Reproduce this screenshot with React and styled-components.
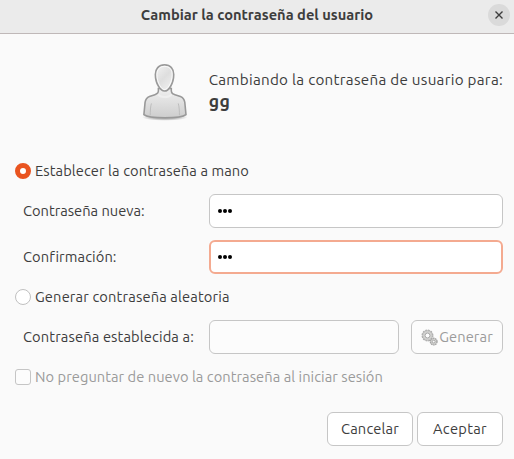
import React from "react";
import styled, { createGlobalStyle } from "styled-components";

const GlobalStyle = createGlobalStyle`
  *, *::before, *::after { box-sizing: border-box; }
  body { margin: 0; background: #fafafa; overflow: hidden; }
`;

const Dialog = styled.div`
  width: 514px;
  height: 459px;
  display: flex;
  flex-direction: column;
  background: #fafafa;
  color: #3d3d3d;
  font: 14.667px/20px Ubuntu, "Noto Sans", sans-serif;
  font-variant-ligatures: none;
`;

const TitleBar = styled.header`
  height: 34px;
  flex: none;
  display: grid;
  grid-template-columns: 22px 1fr 22px;
  align-items: center;
  padding: 0 4px 3px;
  background: #ebebeb;
  border-bottom: 1px solid #bfb8b8;
`;

const Title = styled.h1`
  grid-column: 2;
  margin: 0;
  text-align: center;
  font-size: 14.667px;
  line-height: 20px;
  font-weight: 700;
`;

const CloseButton = styled.button`
  width: 22px;
  height: 22px;
  padding: 0;
  border: 0;
  border-radius: 50%;
  background: #dadada;
  display: grid;
  place-items: center;
`;

const Text = styled.span`
  white-space: nowrap;
  letter-spacing: ${(p) => p.$track || 0}px;
`;

const Content = styled.main`
  flex: 1;
  display: flex;
  flex-direction: column;
  padding: 26px 11px 13px 15px;
`;

const Intro = styled.section`
  height: 64px;
  display: flex;
  padding-left: 126px;
`;

const IntroText = styled.div`
  margin-left: 20px;
  padding-top: 10px;
  display: flex;
  flex-direction: column;
  font-size: 15.2px;
`;

const UserName = styled.strong`
  font-size: 17.6px;
  line-height: 24px;
  letter-spacing: 0.4px;
`;

const Choice = styled.label`
  height: 20px;
  display: flex;
  align-items: center;
  gap: 4px;
  margin-top: ${(p) => p.$top}px;
  color: ${(p) => (p.$disabled ? "#9b9b9b" : "inherit")};
`;

const Radio = styled.i`
  width: 16px;
  height: 16px;
  border-radius: 50%;
  border: ${(p) => (p.$checked ? "5.5px solid #e95420" : "1px solid #c0c0c0")};
  background: #fff;
`;

const Checkbox = styled.i`
  width: 16px;
  height: 16px;
  border-radius: 3px;
  border: 1px solid #c5c5c5;
  background: #fcfcfc;
`;

const Fields = styled.div`
  display: grid;
  grid-template-columns: 186px 1fr;
  row-gap: 12px;
  margin-top: ${(p) => p.$top}px;
  padding-left: 8px;
  align-items: center;
`;

const Entry = styled.div`
  height: 34px;
  flex: 1;
  display: flex;
  align-items: center;
  gap: 1px;
  padding-left: ${(p) => (p.$focused ? 7.4 : 8.4)}px;
  border: ${(p) => (p.$focused ? "2px solid #f4aa90" : "1px solid #c6c6c6")};
  border-radius: 6px;
  background: ${(p) => (p.$disabled ? "#fcfcfc" : "#fff")};
`;

const Dot = styled.i`
  width: 4px;
  height: 4px;
  border-radius: 50%;
  background: #000;
`;

const EntryGroup = styled.div`
  display: flex;
  gap: 12px;
`;

const Button = styled.button`
  width: ${(p) => p.$width}px;
  height: 34px;
  display: flex;
  align-items: center;
  justify-content: center;
  gap: 1px;
  padding: 0;
  border: 1px solid #c6c6c6;
  border-radius: 6px;
  background: ${(p) => (p.$disabled ? "#fcfcfc" : "#fff")};
  color: ${(p) => (p.$disabled ? "#9b9b9b" : "inherit")};
  font: inherit;
`;

const Actions = styled.footer`
  margin-top: auto;
  display: flex;
  justify-content: flex-end;
  gap: 4px;
`;

function UserIcon() {
  return (
    <svg width="48" height="64" viewBox="0 0 48 64">
      <defs>
        <linearGradient id="skin" x1="0" y1="0" x2="0.7" y2="1">
          <stop offset="0" stopColor="#f4f4f4" />
          <stop offset="0.55" stopColor="#dedede" />
          <stop offset="1" stopColor="#efefef" />
        </linearGradient>
        <linearGradient id="torso" x1="0" y1="0" x2="0" y2="1">
          <stop offset="0" stopColor="#f0f0f0" />
          <stop offset="1" stopColor="#cdcdcd" />
        </linearGradient>
        <radialGradient id="shade">
          <stop offset="0.6" stopColor="#000" stopOpacity="0.22" />
          <stop offset="1" stopColor="#000" stopOpacity="0" />
        </radialGradient>
      </defs>
      <ellipse cx="24" cy="57.500" rx="23" ry="3.500" fill="url(#shade)" />
      <path
        d="M17.500 28.500c.3 4-.3 5.200-3.500 6.200l-5.500 1.900c-3 1.100-3.900 2.600-4.400 5.900L2.900 54.800c5 4.300 37.400 4.300 42.400 0l-1.200-12.300c-.5-3.300-1.400-4.800-4.400-5.900l-5.500-1.900c-3.200-1-4-2.200-3.700-6.200z"
        fill="url(#torso)" stroke="#999" strokeWidth="1.600"
      />
      <path d="M17 34.500c3.500 3.500 10.500 3.500 14 0" fill="none" stroke="#fff" strokeWidth="2" opacity=".35" />
      <path d="M10.500 43.500c-1 3-1.200 8-1.200 12M37.500 43.500c1 3 1.200 8 1.200 12" fill="none" stroke="#bcbcbc" />
      <path
        d="M23.700 4.600c6 0 9.200 4.200 9.200 9.800 0 4-1.200 8.800-3.200 12-1.800 3-3.800 4.600-6 4.600s-4.200-1.600-6-4.600c-2-3.200-3.200-8-3.200-12 0-5.600 3.200-9.800 9.200-9.800z"
        fill="url(#skin)" stroke="#999" strokeWidth="1.700"
      />
      <path
        d="M23.700 6.100c5 0 7.700 3.500 7.700 8.300 0 3.700-1.100 8.200-3 11.200-1.500 2.500-3.100 3.900-4.700 3.900s-3.200-1.400-4.700-3.900c-1.900-3-3-7.500-3-11.200 0-4.800 2.700-8.300 7.700-8.300z"
        fill="none" stroke="#fff" opacity=".8"
      />
    </svg>
  );
}

function GearsIcon() {
  return (
    <svg width="17" height="17" viewBox="0 0 17 17" fill="none">
      <circle cx="6.500" cy="6.500" r="5.200" stroke="#aaa" strokeWidth="1.500" strokeDasharray="1.900 .8" />
      <circle cx="6.500" cy="6.500" r="3.800" stroke="#d4d4d2" strokeWidth="2.200" />
      <circle cx="6.500" cy="6.500" r="4.800" stroke="#b0b0b0" strokeWidth=".7" />
      <circle cx="6.500" cy="6.500" r="2.500" stroke="#a3a3a3" />
      <circle cx="12.700" cy="12.600" r="3.300" fill="#d6d6d3" stroke="#a4a4a4" strokeWidth="1.400" strokeDasharray="1.500 .57" />
      <circle cx="12.700" cy="12.600" r="1.400" fill="#fafafa" stroke="#a0a0a0" strokeWidth=".9" />
    </svg>
  );
}

function Password({ focused }) {
  return (
    <Entry $focused={focused}>
      <Dot /><Dot /><Dot />
    </Entry>
  );
}

export default function App() {
  return (
    <>
      <GlobalStyle />
      <Dialog>
        <TitleBar>
          <Title><Text>Cambiar la contraseña del usuario</Text></Title>
          <CloseButton aria-label="Cerrar">
            <svg width="8" height="8" viewBox="0 0 8 8" stroke="#3d3d3d" strokeWidth="1.400">
              <path d="M.5.5l7 7M7.500.5l-7 7" />
            </svg>
          </CloseButton>
        </TitleBar>
        <Content>
          <Intro>
            <UserIcon />
            <IntroText>
              <Text $track={0.28}>Cambiando la contraseña de usuario para:</Text>
              <UserName>gg</UserName>
            </IntroText>
          </Intro>
          <Choice $top={37}>
            <Radio $checked />
            <Text $track={0.09}>Establecer la contraseña a mano</Text>
          </Choice>
          <Fields $top={13}>
            <Text>Contraseña nueva:</Text>
            <Password />
            <Text $track={0.1}>Confirmación:</Text>
            <Password focused />
          </Fields>
          <Choice $top={13}>
            <Radio />
            <Text $track={0.15}>Generar contraseña aleatoria</Text>
          </Choice>
          <Fields $top={13}>
            <Text $track={0.13}>Contraseña establecida a:</Text>
            <EntryGroup>
              <Entry $disabled />
              <Button $width={92} $disabled disabled>
                <GearsIcon />
                <Text $track={0.1}>Generar</Text>
              </Button>
            </EntryGroup>
          </Fields>
          <Choice $top={13} $disabled>
            <Checkbox />
            <Text $track={0.05}>No preguntar de nuevo la contraseña al iniciar sesión</Text>
          </Choice>
          <Actions>
            <Button $width={86}><Text $track={0.15}>Cancelar</Text></Button>
            <Button $width={86}><Text $track={0.3}>Aceptar</Text></Button>
          </Actions>
        </Content>
      </Dialog>
    </>
  );
}
